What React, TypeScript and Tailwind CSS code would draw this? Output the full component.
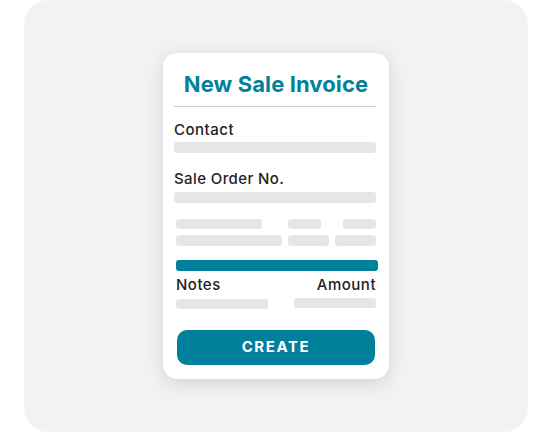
import React from "react";

const Bar = ({ className }: { className: string }) => (
  <div className={`bg-[#e6e6e6] rounded-[3px] ${className}`} />
);

export default function App() {
  return (
    <div className="w-[548px] h-[432px] bg-white pl-[24px] pr-[20px]" style={{ fontFamily: "Inter, 'Noto Sans', sans-serif" }}>
      <div className="w-full h-full bg-[#f2f2f2] rounded-[24px] flex items-center justify-center">
        <div className="w-[226px] bg-white rounded-[14px] shadow-[0_4px_18px_rgba(0,0,0,0.13)] px-[11px] pt-[17px] pb-[14px] flex flex-col">
          <div className="text-center text-[22px] leading-[28px] font-bold text-[#00829a] tracking-[0.1px]">New Sale Invoice</div>
          <div className="mt-[8px] h-px bg-[#cfcfcf] w-[202px]" />
          <div className="mt-[13px] text-[15px] leading-[20px] font-medium text-[#222] tracking-[0.5px]">Contact</div>
          <Bar className="mt-[2px] h-[11px] w-[202px]" />
          <div className="mt-[16px] text-[15px] leading-[20px] font-medium text-[#222] tracking-[0.4px]">Sale Order No.</div>
          <Bar className="mt-[3px] h-[11px] w-[202px]" />
          <div className="ml-[2px] w-[202px] flex flex-col">
            <div className="mt-[16px] w-[200px] flex justify-between">
              <Bar className="h-[10px] w-[86px]" />
              <div className="flex gap-[22px]">
                <Bar className="h-[10px] w-[33px]" />
                <Bar className="h-[10px] w-[33px]" />
              </div>
            </div>
            <div className="mt-[6px] flex gap-[6px]">
              <Bar className="h-[11px] w-[106px]" />
              <Bar className="h-[11px] w-[41px]" />
              <Bar className="h-[11px] w-[41px]" />
            </div>
            <div className="mt-[14px] h-[11px] w-[202px] bg-[#00809a] rounded-[3px]" />
            <div className="mt-[4px] w-[200px] flex justify-between text-[15px] leading-[20px] font-medium text-[#222] tracking-[0.5px]">
              <span>Notes</span>
              <span>Amount</span>
            </div>
            <div className="mt-[3px] w-[200px] flex justify-between items-start">
              <Bar className="mt-[1px] h-[10px] w-[92px]" />
              <Bar className="h-[10px] w-[82px]" />
            </div>
            <button className="mt-[21px] ml-[1px] h-[35px] w-[198px] bg-[#00809a] rounded-[10px] text-white text-[15px] font-bold tracking-[1.6px]">
              CREATE
            </button>
          </div>
        </div>
      </div>
    </div>
  );
}
